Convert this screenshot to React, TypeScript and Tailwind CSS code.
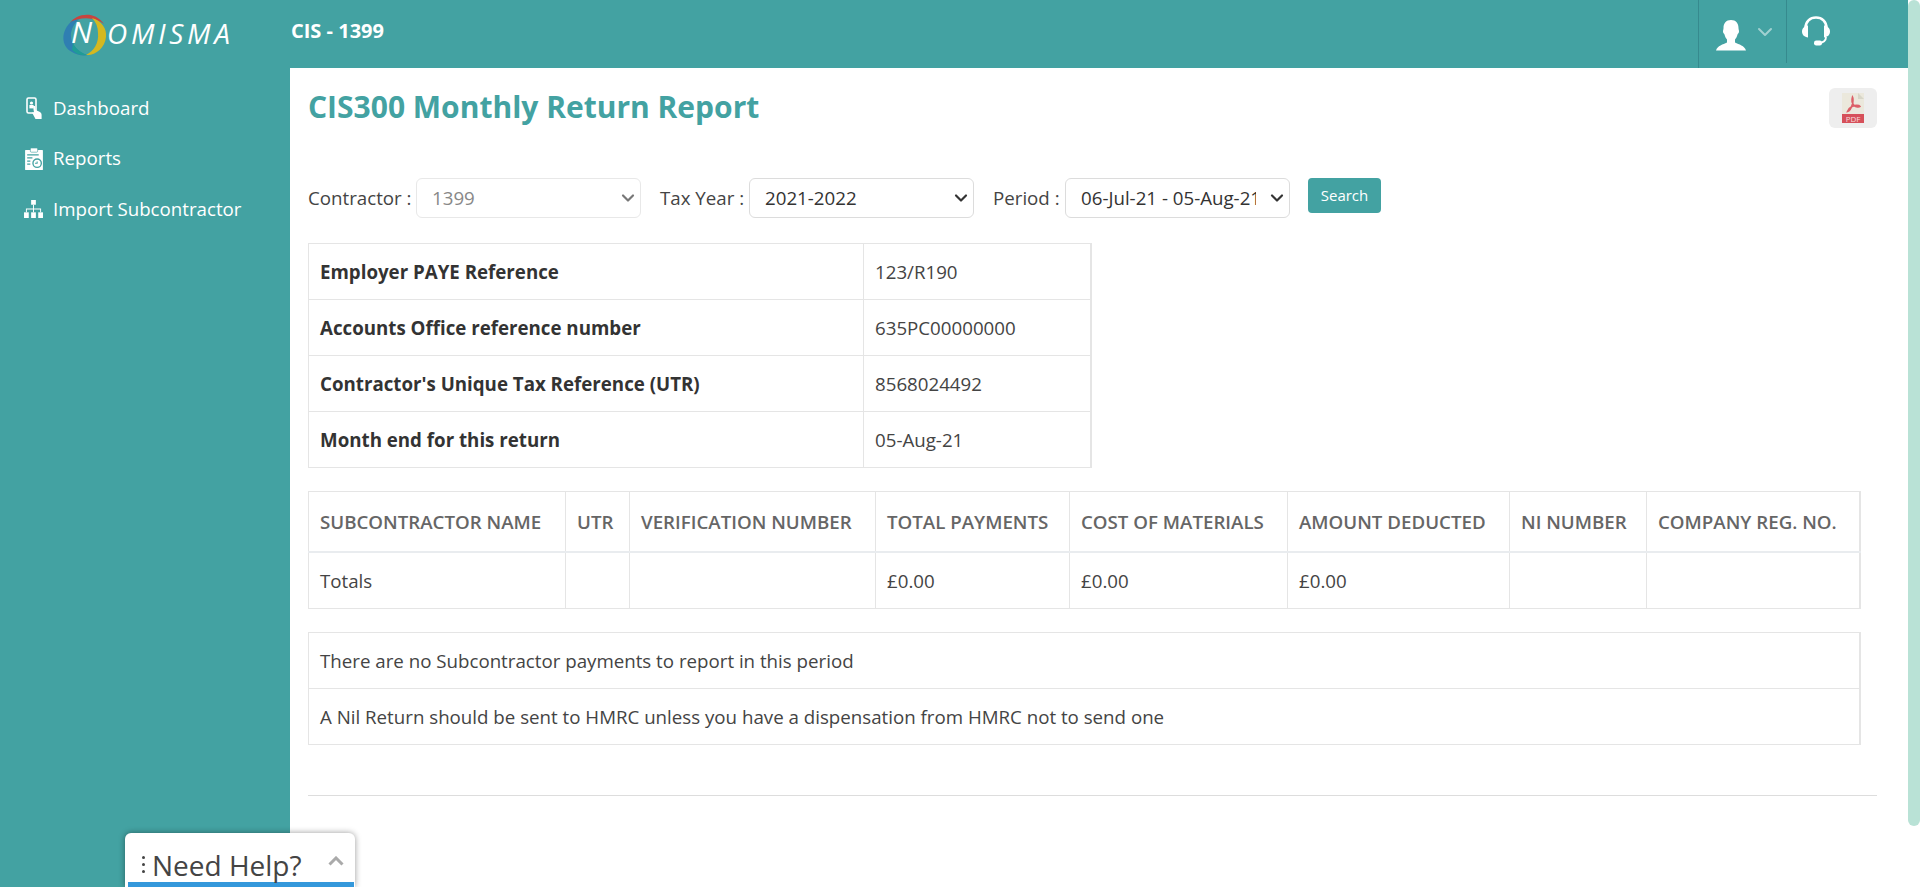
import { ChevronDown } from "lucide-react";

const summary = [
  ["Employer PAYE Reference", "123/R190"],
  ["Accounts Office reference number", "635PC00000000"],
  ["Contractor's Unique Tax Reference (UTR)", "8568024492"],
  ["Month end for this return", "05-Aug-21"],
];

const columns = [
  { label: "SUBCONTRACTOR NAME", value: "Totals", width: "w-[257px]" },
  { label: "UTR", value: "", width: "w-[64px]" },
  { label: "VERIFICATION NUMBER", value: "", width: "w-[246px]" },
  { label: "TOTAL PAYMENTS", value: "£0.00", width: "w-[194px]" },
  { label: "COST OF MATERIALS", value: "£0.00", width: "w-[218px]" },
  { label: "AMOUNT DEDUCTED", value: "£0.00", width: "w-[222px]" },
  { label: "NI NUMBER", value: "", width: "w-[137px]" },
  { label: "COMPANY REG. NO.", value: "", width: "w-[213px]" },
];

function Logo() {
  return (
    <div className="relative w-[170px] h-[44px] ml-[63px] shrink-0">
      <svg width="44" height="44" viewBox="0 0 44 44" className="absolute left-0 top-0">
        <path d="M7 11 C13 2 31 -2 41 12 C32 5 17 4 7 11 Z" fill="#c8443f" />
        <path d="M9 9 C-2 18 -3 34 9 40 C14 43 20 44 24 43 C12 39 7 30 8 21 C9 15 12 11 16 7 Z" fill="#2f7fb2" />
        <path d="M9 38 C14 43 20 44 25 43 C18 41 13 37 10 31 Z" fill="#1f9c96" />
        <path d="M29 6 C39 9 44 17 43 25 C42 36 32 44 23 43 C31 39 36 31 35 21 C35 15 33 10 29 6 Z" fill="#d4b820" />
      </svg>
      <span className="absolute left-[8px] top-[-2px] text-[30px] leading-[44px] font-medium italic text-white">
        N
      </span>
      <span className="absolute left-[44px] top-[-1px] text-[28px] leading-[44px] italic tracking-[3.7px] text-white">
        OMISMA
      </span>
    </div>
  );
}

function DashboardIcon() {
  return (
    <svg width="16" height="22" viewBox="0 0 16 22" fill="none" className="ml-[2px]">
      <rect x="1" y="1" width="9" height="15" rx="1.5" stroke="white" strokeWidth="1.6" />
      <circle cx="5.5" cy="6" r="1.6" fill="white" />
      <rect x="3.4" y="8" width="4.2" height="3.4" fill="white" />
      <path d="M7 9 L9 9 L9.5 13 L13 14.5 C15 15.2 15.6 16.5 15.6 18 L15.6 22 L9.5 22 L6 15.5 L8 15.5 Z" fill="white" />
    </svg>
  );
}

function ReportsIcon() {
  return (
    <svg width="18" height="22" viewBox="0 0 17 21" className="ml-[1px]">
      <rect x="0" y="2" width="17" height="19" rx="0.5" fill="white" />
      <rect x="5" y="0" width="7" height="4" rx="1" fill="white" stroke="#43a2a2" strokeWidth="0.6" />
      <path d="M2 6.5 H13 M2 9.5 H7 M2 12.5 H5 M2 15.5 H5" stroke="#43a2a2" strokeWidth="1.2" />
      <circle cx="11.5" cy="14.5" r="4" fill="white" stroke="#43a2a2" strokeWidth="1.3" />
      <path d="M9.5 14.5 H11.5 V13" stroke="#43a2a2" strokeWidth="1" fill="none" />
    </svg>
  );
}

function ImportIcon() {
  return (
    <svg width="19" height="18" viewBox="0 0 20 19" fill="white">
      <rect x="7.5" y="0" width="5" height="5" />
      <rect x="0" y="13" width="5" height="6" />
      <rect x="7.5" y="13" width="5" height="6" />
      <rect x="15" y="13" width="5" height="6" />
      <path d="M9.5 5 H10.5 V9 H18 V13 H17 V10 H10.5 V13 H9.5 V10 H3 V13 H2 V9 H9.5 Z" />
    </svg>
  );
}

function UserIcon() {
  return (
    <svg width="30" height="31" viewBox="0 0 30 31" fill="white">
      <path d="M15 0 C20 0 22.5 3.5 22.5 8 C22.5 9.5 23 10 23 11.5 C23 13 22 13.5 21.5 14.5 C21 16.5 20 18.5 19 19.5 L19 22.5 C23 24.5 28.5 25.5 30 30.5 L0 30.5 C1.5 25.5 7 24.5 11 22.5 L11 19.5 C10 18.5 9 16.5 8.5 14.5 C8 13.5 7 13 7 11.5 C7 10 7.5 9.5 7.5 8 C7.5 3.5 10 0 15 0 Z" />
    </svg>
  );
}

function HeadsetIcon() {
  return (
    <svg width="28" height="31" viewBox="0 0 28 31" fill="none">
      <path d="M3.5 14 V12 C3.5 5.5 8 1.5 14 1.5 C20 1.5 24.5 5.5 24.5 12 V14" stroke="white" strokeWidth="2.6" />
      <path d="M6 9.5 C2.5 10 0 12 0 15.5 C0 19 2.5 21 6 21.5 Z" fill="white" />
      <path d="M22 9.5 C25.5 10 28 12 28 15.5 C28 19 25.5 21 22 21.5 Z" fill="white" />
      <path d="M24 21 C24 25 22 26.5 17 27" stroke="white" strokeWidth="1.8" />
      <rect x="12" y="24.5" width="8" height="5" rx="2.2" fill="white" />
    </svg>
  );
}

function PdfIcon() {
  return (
    <div className="relative w-[22px] h-[30px] bg-[#ebe8dc] overflow-hidden">
      <svg width="22" height="21" viewBox="0 0 22 21" fill="none" className="absolute left-0 top-0">
        <path d="M16 0 L22 6 L16 6 Z" fill="#d8d6c8" />
        <path d="M10.5 4 C9.5 7 10 10 12 12.5 C14 14 17 14.5 18 13.5 C17 12 13 12 10 13.5 C8 14.5 6 17 5.5 18.5 C7.5 18 9.5 14.5 10.5 11 C11 8.5 11.5 6 10.5 4 Z" stroke="#dc6068" strokeWidth="1.6" />
      </svg>
      <div className="absolute left-0 bottom-0 w-full h-[9px] bg-[#d6505a] text-[#f6dcdc] text-[8px] leading-[9px] text-center">
        PDF
      </div>
    </div>
  );
}

function NavItem({ icon, label }: { icon: React.ReactNode; label: string }) {
  return (
    <a className="flex items-center h-[22px] text-[18.72px] text-white">
      <span className="w-[53px] pl-[24px] flex justify-start items-center shrink-0">{icon}</span>
      {label}
    </a>
  );
}

function Select({ value, muted }: { value: string; muted?: boolean }) {
  return (
    <div className="relative w-[225px] h-[40px] shrink-0">
      <select
        disabled={muted}
        className={`appearance-none w-full h-full pl-[15px] pr-[33px] bg-white rounded-md text-[18.72px] opacity-100 border ${muted ? "border-[#e8e8e8] text-[#888]" : "border-[#dcdcdc] text-[#333]"}`}
      >
        <option>{value}</option>
      </select>
      <ChevronDown
        className={`absolute right-[3px] top-[10px] w-[20px] h-[20px] pointer-events-none ${muted ? "text-[#777]" : "text-[#333]"}`}
        strokeWidth={2.6}
      />
    </div>
  );
}

export default function App() {
  return (
    <div className="relative flex h-[887px] overflow-hidden bg-white font-['Open_Sans',sans-serif] text-[18.72px] text-[#444]">
      <div className="flex-1 min-w-0 flex flex-col">
        <header className="h-[68px] shrink-0 flex bg-[#43a2a2] text-white">
          <div className="w-[291px] shrink-0 flex items-center">
            <Logo />
          </div>
          <div className="font-bold text-[20px] leading-[62px]">CIS - 1399</div>
          <div className="ml-auto flex">
            <div className="w-[88px] h-[68px] border-l border-[#368a8e] flex pl-[17px] pt-[20px]">
              <UserIcon />
              <ChevronDown className="ml-[7px] w-[24px] h-[24px] text-white/50" strokeWidth={2} />
            </div>
            <div className="w-[122px] h-[63px] border-l border-[#368a8e] pl-[15px] pt-[16px]">
              <HeadsetIcon />
            </div>
          </div>
        </header>

        <div className="flex flex-1 min-h-0">
          <aside className="w-[290px] shrink-0 bg-[#43a2a2] pt-[29px] flex flex-col gap-[28.5px]">
            <NavItem icon={<DashboardIcon />} label="Dashboard" />
            <NavItem icon={<ReportsIcon />} label="Reports" />
            <NavItem icon={<ImportIcon />} label="Import Subcontractor" />
          </aside>

          <main className="flex-1 min-w-0 pl-[18px] pr-[31px]">
            <div className="flex justify-between pt-[20px] h-[110px]">
              <h1 className="text-[30px] leading-[38px] font-bold text-[#43a2a2]">CIS300 Monthly Return Report</h1>
              <button className="w-[48px] h-[40px] bg-[#eeeeee] rounded-md flex items-center justify-center">
                <PdfIcon />
              </button>
            </div>

            <div className="flex items-start">
              <label className="h-[40px] leading-[40px] w-[108px]">Contractor :</label>
              <Select value="1399" muted />
              <label className="h-[40px] leading-[40px] w-[89px] ml-[19px]">Tax Year :</label>
              <Select value="2021-2022" />
              <label className="h-[40px] leading-[40px] w-[72px] ml-[19px]">Period :</label>
              <Select value="06-Jul-21 - 05-Aug-21" />
              <button className="w-[73px] h-[35px] ml-[18px] bg-[#43a2a2] rounded text-white text-[15px]">Search</button>
            </div>

            <table className="mt-[25px] w-[784px] table-fixed border-collapse">
              <colgroup>
                <col className="w-[555px]" />
                <col />
              </colgroup>
              <tbody>
                {summary.map(([label, value]) => (
                  <tr key={label} className="h-[56px]">
                    <td className="border border-[#e5e5e5] px-[11px] pt-[2px] font-bold text-[#333]">{label}</td>
                    <td className="border border-[#e5e5e5] border-r-2 px-[11px] pt-[2px]">{value}</td>
                  </tr>
                ))}
              </tbody>
            </table>

            <table className="mt-[23px] w-[1551px] table-fixed border-collapse">
              <thead>
                <tr className="h-[60px]">
                  {columns.map((c, i) => (
                    <th
                      key={c.label}
                      className={`${c.width} border border-[#e5e5e5] border-b-2 border-b-[#e9ecef] px-[11px] pt-[2px] text-left font-semibold text-[#666] whitespace-nowrap ${i === columns.length - 1 ? "border-r-2" : ""}`}
                    >
                      {c.label}
                    </th>
                  ))}
                </tr>
              </thead>
              <tbody>
                <tr className="h-[57px]">
                  {columns.map((c, i) => (
                    <td
                      key={c.label}
                      className={`border border-[#e5e5e5] px-[11px] pt-[2px] ${i === columns.length - 1 ? "border-r-2" : ""}`}
                    >
                      {c.value}
                    </td>
                  ))}
                </tr>
              </tbody>
            </table>

            <table className="mt-[23px] w-[1553px] border-collapse">
              <tbody>
                <tr className="h-[56px]">
                  <td className="border border-[#e5e5e5] border-r-2 px-[11px] pt-[2px]">
                    There are no Subcontractor payments to report in this period
                  </td>
                </tr>
                <tr className="h-[56px]">
                  <td className="border border-[#e5e5e5] border-r-2 px-[11px] pt-[2px]">
                    A Nil Return should be sent to HMRC unless you have a dispensation from HMRC not to send one
                  </td>
                </tr>
              </tbody>
            </table>

            <hr className="mt-[50px] border-t border-[#dddddd]" />
          </main>
        </div>
      </div>

      <div className="w-[12px] shrink-0 bg-white">
        <div className="h-[826px] bg-[#b9e2d6] rounded-md" />
      </div>

      <div className="absolute left-[125px] bottom-0 w-[230px] h-[54px] bg-white rounded-t-md shadow-[0_0_6px_rgba(0,0,0,0.4)]">
        <div className="flex items-center h-[49px] pt-[14px] pl-[17px] text-[28px] leading-[38px] text-[#444]">
          <span className="flex flex-col gap-[4px] mr-[7px]">
            <span className="w-[3px] h-[3px] rounded-full bg-[#444]" />
            <span className="w-[3px] h-[3px] rounded-full bg-[#444]" />
            <span className="w-[3px] h-[3px] rounded-full bg-[#444]" />
          </span>
          Need Help?
        </div>
        <svg width="16" height="10" viewBox="0 0 16 10" fill="none" className="absolute right-[11px] top-[23px]">
          <path d="M1.5 8.5 L8 2 L14.5 8.5" stroke="#aaaaaa" strokeWidth="3" />
        </svg>
        <div className="ml-[3px] mr-[1px] h-[5px] bg-[#3498db]" />
      </div>
    </div>
  );
}
